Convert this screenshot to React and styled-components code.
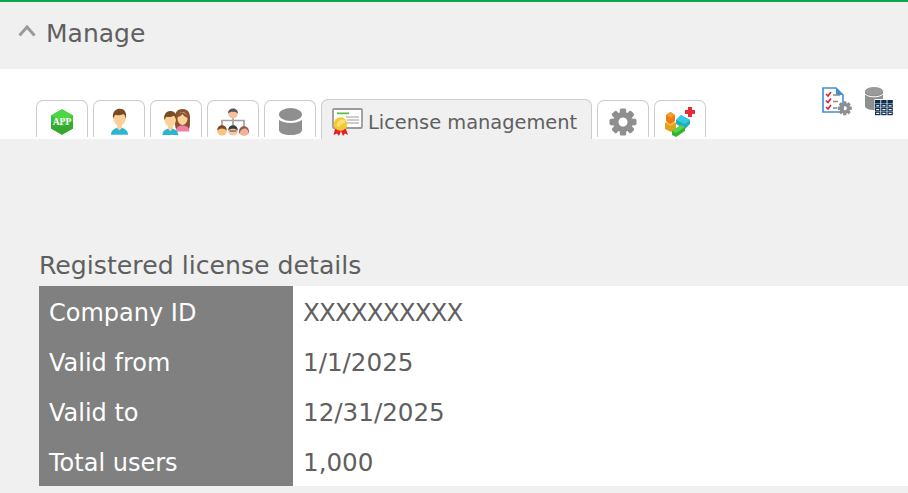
import React from "react";
import styled, { createGlobalStyle } from "styled-components";

const Global = createGlobalStyle`
  html, body { margin: 0; padding: 0; background: #f0f0f0; overflow: hidden; }
  body { font-family: "DejaVu Sans", "Noto Sans CJK JP", sans-serif; color: #5f5f5f; }
  svg { display: block; }
`;
const Page = styled.div`
  width: 908px; height: 493px; border-top: 2px solid #09a64a; box-sizing: border-box; background: #f0f0f0;
`;
const Header = styled.header`
  height: 67px; display: flex; align-items: center; padding: 0 0 4px 18px; box-sizing: border-box; gap: 10px;
`;
const ChevronSvg = styled.svg`
  margin-bottom: 7px;
`;
const Title = styled.h1`
  margin: 0; font-size: 25px; font-weight: 400; line-height: 32px; color: #5f5f5f;
`;
const TabBar = styled.nav`
  height: 70px; background: #fff; display: flex; align-items: flex-start; justify-content: space-between; box-sizing: border-box; padding: 18px 15px 0 36px;
`;
const Tabs = styled.div`
  display: flex; gap: 5px; padding-top: 11px; height: 52px; box-sizing: border-box; align-items: flex-end;
`;
const Tab = styled.div`
  box-sizing: border-box; display: flex; align-items: center; justify-content: center;
  width: 52px; height: 37px; margin-bottom: 2px; padding-top: 5px; border: 1px solid #cccccc; border-bottom: 0; border-radius: 7px 7px 0 0; background: #fff; overflow: visible;
`;
const ActiveTab = styled.div`
  box-sizing: border-box; display: flex; align-items: center; gap: 4px; width: 271px; height: 40px; padding: 6px 0 0 10px;
  border: 1px solid #cccccc; border-bottom: 0; border-radius: 7px 7px 0 0; background: #f0f0f0;
  font-size: 19.4px; color: #5f5f5f; white-space: nowrap;
`;
const Tools = styled.div`
  display: flex; gap: 13px;
`;
const Content = styled.main`
  padding: 107px 0 0 39px;
`;
const Section = styled.h2`
  margin: 0; font-size: 25.2px; font-weight: 400; line-height: 40px; color: #5f5f5f;
`;
const Table = styled.div`
  display: grid; grid-template-columns: 254px 1fr; grid-auto-rows: 50px;
`;
const Label = styled.div`
  background: #808080; color: #fff; font-size: 24px; padding-left: 10px; display: flex; align-items: center; padding-top: 3px; box-sizing: border-box;
`;
const Value = styled.div`
  background: #fff; color: #5f5f5f; font-size: 24.6px; letter-spacing: ${(p) => p.$spacing}px; padding-left: 10px; display: flex; align-items: center; padding-top: 2px; box-sizing: border-box;
`;

const Chevron = () => (
  <ChevronSvg width="18" height="13" viewBox="0 0 18 13">
    <path d="M1.5 11.5 L9 3 L16.5 11.5" fill="none" stroke="#9a9a9a" strokeWidth="3" />
  </ChevronSvg>
);
const AppIcon = () => (
  <svg width="22" height="26" viewBox="0 0 24 28">
    <path d="M12 0 L24 7 V21 L12 28 L0 21 V7 Z" fill="#3fbf3a" />
    <path d="M12 0 L24 7 L12 14 L0 7 Z" fill="#4cd644" />
    <path d="M12 19 L24 14 V21 L12 28 L0 21 V14 Z" fill="#35a832" />
    <text x="12" y="17" textAnchor="middle" fontFamily="Liberation Serif, serif" fontWeight="700" fontSize="10.5" fill="#fff">APP</text>
  </svg>
);
const Person = ({ x = 0, shirt = "#2bb5d0" }) => (
  <g transform={`translate(${x} 0)`}>
    <path d="M1 28 C1 23.5 4 22 7.5 20.5 L12.5 20.5 C16 22 19 23.5 19 28 Z" fill={shirt} />
    <path d="M7.5 16 H12.5 V21 L10 23.5 L7.5 21 Z" fill="#fbd09a" />
    <ellipse cx="10" cy="10.5" rx="6.5" ry="8" fill="#fbd09a" />
    <path d="M3.2 11 C2 3 6.5 0.5 10.5 0.5 C14.5 0.5 18 3.5 16.8 11 C16 8.5 15.5 7 14 6 C11 7.8 7 7.8 5.5 7 C4.5 8.5 4 9.5 3.2 11 Z" fill="#7a4a22" />
  </g>
);
const UserIcon = () => (
  <svg width="19" height="27" viewBox="0 0 20 28"><Person /></svg>
);
const GroupIcon = () => (
  <svg width="28" height="26" viewBox="0 0 28 26">
    <path d="M13 12 C12.5 5 14 0 20.5 0 C27 0 28.5 5 28 12 C28 15 28 18 27 20 L14 20 C13 18 13 15 13 12 Z" fill="#8a5230" />
    <path d="M14 22.5 C14 18 17 16.5 20.5 16.5 C24 16.5 27 18 27.5 22.5 Z" fill="#ef7fa5" />
    <ellipse cx="20.5" cy="9.5" rx="5" ry="6.5" fill="#fbd09a" />
    <path d="M15 8 C16 4 20 2.5 21 3.5 C23 4.5 26 6 26 9 C23.5 8 21.5 7 20.5 5 C19 7 17 8 15 8 Z" fill="#8a5230" />
    <g transform="translate(-0.5 1.5) scale(.88)"><Person /></g>
  </svg>
);
const OrgIcon = () => (
  <svg width="32" height="28" viewBox="0 0 32 28">
    <path d="M16 10 V13 M5 18 V12.5 H27 V18 M16 13 V18" stroke="#a3a3a3" strokeWidth="1.7" fill="none" />
    <circle cx="16" cy="5.6" r="4.8" fill="#f7bf9b" />
    <path d="M11 5.5 C11 -1.2 21 -1.2 21 5.5 C19 3 13 3 11 5.5 Z" fill="#5c5655" />
    <circle cx="5" cy="22.8" r="4.8" fill="#f9c47f" />
    <path d="M0.2 22.5 C0.2 15.5 9.8 15.5 9.8 22.5 C7.5 19.8 2.5 19.8 0.2 22.5 Z" fill="#7b4a20" />
    <circle cx="16" cy="22.8" r="4.8" fill="#f7c6a0" />
    <path d="M11.2 22.5 C11.2 15.5 20.8 15.5 20.8 22.5 C18.5 20 13.5 20 11.2 22.5 Z" fill="#3c3c3c" />
    <path d="M12.5 23 H19.5" stroke="#555" strokeWidth="1.1" />
    <circle cx="27" cy="23" r="5" fill="#f1b397" />
    <path d="M22 26.5 C20.5 15.5 33.5 15.5 32 26.5 C31.5 22 29.5 20.5 27.5 20.5 C25 20.5 23 22.5 22 26.5 Z" fill="#8d5a4e" />
  </svg>
);
const DbIcon = () => (
  <svg width="23" height="27" viewBox="0 0 23 27">
    <path d="M0 12 V22 C0 25 5 27 11.5 27 C18 27 23 25 23 22 V12 C20 14 16 15 11.5 15 C7 15 3 14 0 12 Z" fill="#8f8f8f" />
    <ellipse cx="11.5" cy="6.5" rx="11.5" ry="6.5" fill="#8f8f8f" />
  </svg>
);
const CertIcon = () => (
  <svg width="32" height="29" viewBox="0 0 32 29">
    <rect x="1" y="1" width="29" height="19" rx="1" fill="#fff" stroke="#9b9b9b" strokeWidth="1.8" />
    <rect x="5" y="4.5" width="12" height="1.7" fill="#4fbf3f" />
    <path d="M14 9 H27 M15 12 H27 M15 15 H27" stroke="#9b9b9b" strokeWidth="1" />
    <path d="M3 21 L1.5 27 L5 25.5 L7 28 L9 23 L11 28 L13 25.5 L16 27 L14 21 Z" fill="#e61f26" />
    <circle cx="8.5" cy="16" r="6.8" fill="#f6c92e" />
    <path d="M4.5 17 C6 12 9 10.5 13 12 C14.5 15 11 15 9 17 C7.5 19 6 19.5 4.5 17 Z" fill="#fbe27a" />
  </svg>
);
const Gear = ({ size = 28, color = "#8f8f8f" }) => {
  const teeth = [0, 45, 90, 135, 180, 225, 270, 315];
  return (
    <svg width={size} height={size} viewBox="0 0 28 28">
      {teeth.map((a) => (
        <rect key={a} x="10.8" y="0.5" width="6.4" height="7" rx="1.6" fill={color} transform={`rotate(${a} 14 14)`} />
      ))}
      <path fillRule="evenodd" fill={color} d="M14 4 A10 10 0 1 0 14.01 4 Z M14 9.5 A4.5 4.5 0 1 1 13.99 9.5 Z" />
    </svg>
  );
};
const BlocksIcon = () => (
  <svg width="30" height="30" viewBox="0 0 30 30">
    <path d="M0 16 L5 13 L11 16 V22 L6 25 L0 22 Z" fill="#dfa21f" />
    <path d="M0 16 L5 13 L11 16 L6 19 Z" fill="#f0bd3d" />
    <path d="M1 8 L5.5 5 L10 8 V14 L5.5 17 L1 14 Z" fill="#ee7a12" />
    <path d="M1 8 L5.5 5 L10 8 L5.5 11 Z" fill="#f69c2c" />
    <path d="M11 13 L16 8 L25 13 V17 L20 22 L11 17 Z" fill="#1fadc6" />
    <path d="M11 13 L16 8 L25 13 L20 17 Z" fill="#33cbdf" />
    <path d="M7 24 L16 18 L20 20 V24 L11 30 L7 28 Z" fill="#36b22d" />
    <path d="M7 24 L16 18 L20 20 L11 26 Z" fill="#55d648" />
    <path d="M23 0 H27 V3 H30 V7 H27 V10 H23 V7 H20 V3 H23 Z" fill="#e8293b" />
  </svg>
);
const ReportIcon = () => (
  <svg width="30" height="29" viewBox="0 0 30 29">
    <path d="M1 1 H14 L21 8 V25 H1 Z" fill="#fff" stroke="#3d8fd6" strokeWidth="1.6" />
    <path d="M14 1 L21 8 H14 Z" fill="#3d8fd6" />
    <path d="M4 7 L6 9 L9 5 M4 13.5 L6 15.5 L9 11.5 M4 20 L6 22 L9 18" fill="none" stroke="#e3202c" strokeWidth="1.6" />
    <path d="M11 8 H18 M11 14.5 H16 M11 21 H15" stroke="#8a8a8a" strokeWidth="1.5" />
    <g transform="translate(15.5 14) scale(.52)">
      {[0, 45, 90, 135, 180, 225, 270, 315].map((a) => (
        <rect key={a} x="10.8" y="0.5" width="6.4" height="7" rx="1.2" fill="#8f8f8f" transform={`rotate(${a} 14 14)`} />
      ))}
      <path fillRule="evenodd" fill="#8f8f8f" d="M14 4 A10 10 0 1 0 14.01 4 Z M14 10 A4 4 0 1 1 13.99 10 Z" />
    </g>
  </svg>
);
const DbTableIcon = () => (
  <svg width="28" height="29" viewBox="0 0 28 29">
    <path d="M0 4 V19 C0 21.5 4 23 9 23 C14 23 18 21.5 18 19 V4 Z" fill="#8f8f8f" />
    <ellipse cx="9" cy="4" rx="9" ry="4" fill="#9a9a9a" />
    <path d="M0 7 C2 9 5 9.8 9 9.8 C13 9.8 16 9 18 7" fill="none" stroke="#fff" strokeWidth="1" />
    <rect x="9.5" y="12" width="18.5" height="17" fill="#fff" />
    {[0, 1, 2].map((c) => (
      <rect key={c} x={10 + c * 6.2} y="13" width="5.4" height="3.6" fill="#0e2f52" />
    ))}
    {[0, 1, 2].flatMap((c) =>
      [0, 1, 2].map((r) => (
        <rect key={`${c}${r}`} x={10.6 + c * 6.2} y={17.6 + r * 3.8} width="4.2" height="2.4" fill="#fff" stroke="#0e2f52" strokeWidth="1.2" />
      ))
    )}
  </svg>
);

const rows = [
  ["Company ID", "XXXXXXXXXX", -0.9],
  ["Valid from", "1/1/2025", 0],
  ["Valid to", "12/31/2025", 0],
  ["Total users", "1,000", 0],
];

export default function App() {
  return (
    <Page>
      <Global />
      <Header>
        <Chevron />
        <Title>Manage</Title>
      </Header>
      <TabBar>
        <Tabs>
          <Tab><AppIcon /></Tab>
          <Tab><UserIcon /></Tab>
          <Tab><GroupIcon /></Tab>
          <Tab><OrgIcon /></Tab>
          <Tab><DbIcon /></Tab>
          <ActiveTab><CertIcon />License management</ActiveTab>
          <Tab><Gear /></Tab>
          <Tab><BlocksIcon /></Tab>
        </Tabs>
        <Tools>
          <ReportIcon />
          <DbTableIcon />
        </Tools>
      </TabBar>
      <Content>
        <Section>Registered license details</Section>
        <Table>
          {rows.map(([k, v, s]) => (
            <React.Fragment key={k}>
              <Label>{k}</Label>
              <Value $spacing={s}>{v}</Value>
            </React.Fragment>
          ))}
        </Table>
      </Content>
    </Page>
  );
}
